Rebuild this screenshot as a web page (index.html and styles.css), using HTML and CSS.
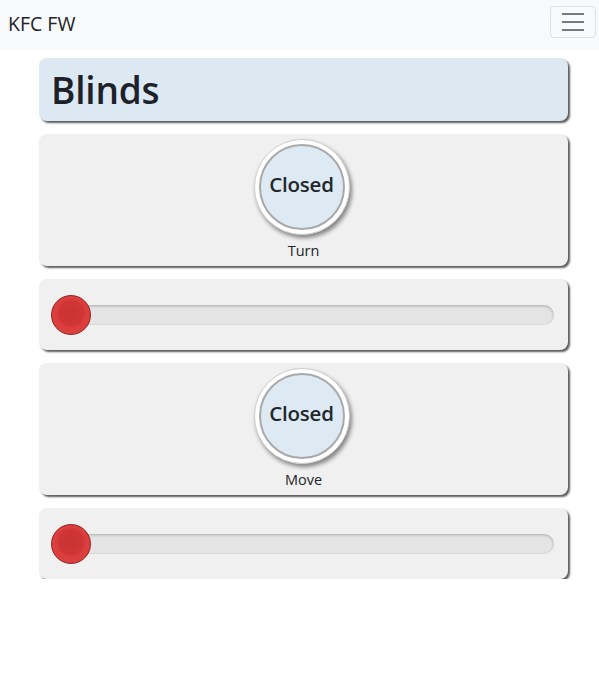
FILE: index.html
```html
<!DOCTYPE html>
<html>
<head>
<meta charset="utf-8">
<link rel="stylesheet" href="styles.css">
</head>
<body>
<nav class="navbar">
  <span class="brand">KFC FW</span>
  <button class="toggler"><span class="bar"></span><span class="bar"></span><span class="bar"></span></button>
</nav>
<main class="container">
  <div class="card card-title"><h1>Blinds</h1></div>
  <div class="card card-button">
    <div class="ring"><div class="knob">Closed</div></div>
    <div class="label">Turn</div>
  </div>
  <div class="card card-slider">
    <div class="track"><div class="thumb"></div></div>
  </div>
  <div class="card card-button">
    <div class="ring"><div class="knob">Closed</div></div>
    <div class="label">Move</div>
  </div>
  <div class="card card-slider">
    <div class="track"><div class="thumb"></div></div>
  </div>
</main>
</body>
</html>
```
FILE: styles.css
```css
* { box-sizing: border-box; }
body {
  margin: 0;
  font-family: "Open Sans", "Noto Sans", sans-serif;
  color: #212529;
  background: #fff;
}
.navbar {
  height: 50px;
  background: #f8f9fa;
  display: flex;
  align-items: center;
  justify-content: space-between;
  padding: 0 3px 0 8px;
}
.brand {
  font-size: 19.5px;
  color: #212529;
  margin-top: -3px;
}
.toggler {
  width: 46px;
  height: 32px;
  margin-top: -6px;
  border: 1px solid rgba(0,0,0,0.1);
  border-radius: 4px;
  background: transparent;
  display: flex;
  flex-direction: column;
  align-items: center;
  justify-content: center;
  gap: 6px;
  padding: 0;
}
.bar {
  display: block;
  width: 22px;
  height: 2px;
  background: #7a7a7a;
}
.container {
  width: 529px;
  margin-left: 39px;
  padding-top: 8px;
  display: flex;
  flex-direction: column;
  gap: 13px;
}
.card {
  background: #f0f0f0;
  border-radius: 8px;
  box-shadow: 2px 2px 2px #5c5c5c;
}
.card-title {
  background: #dce9f3;
  height: 63px;
  display: flex;
  align-items: center;
  padding-left: 12px;
}
.card-title h1 {
  margin: 0;
  font-size: 37px;
  font-weight: 600;
  color: #1e2228;
  letter-spacing: -0.2px;
}
.card-button {
  height: 132px;
  display: flex;
  flex-direction: column;
  align-items: center;
  padding-top: 5px;
}
.ring {
  width: 96px;
  height: 96px;
  margin-right: 4px;
  border-radius: 50%;
  background: #fff;
  border: 1px solid #cfcfcf;
  box-shadow: 2px 3px 4px rgba(0,0,0,0.45);
  display: flex;
  align-items: center;
  justify-content: center;
}
.knob {
  width: 86px;
  height: 86px;
  border-radius: 50%;
  background: #dde9f3;
  border: 2px solid #a9a9a9;
  display: flex;
  align-items: center;
  justify-content: center;
  font-size: 20.5px;
  font-weight: 600;
  color: #23272b;
  padding-bottom: 7px;
  letter-spacing: -0.2px;
}
.label {
  margin-top: 6px;
  font-size: 14.5px;
  line-height: 20px;
  color: #212529;
}
.card-slider {
  height: 71px;
  display: flex;
  align-items: center;
  padding: 0 14px 0 13px;
}
.track {
  position: relative;
  width: 100%;
  height: 20px;
  border-radius: 10px;
  background: #e4e4e4;
  box-shadow: inset 0 1px 3px rgba(0,0,0,0.25);
}
.thumb {
  position: absolute;
  left: -1px;
  top: -10px;
  width: 40px;
  height: 40px;
  border-radius: 50%;
  background: radial-gradient(circle at 50% 45%, #c93333 0, #cf3535 12px, #dc3d3d 15px, #e04040 100%);
  border: 1px solid #8f2424;
}
```
